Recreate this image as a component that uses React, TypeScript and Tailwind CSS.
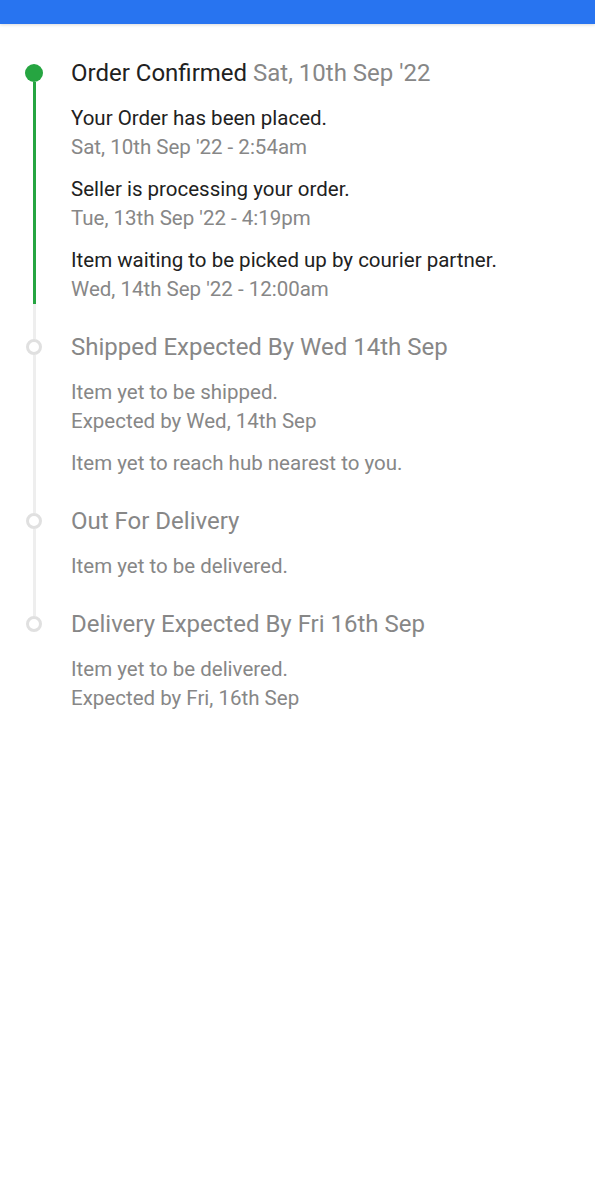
import React from 'react';

type Line = { text: string; sub?: string };
type Step = { title: string; date?: string; done: boolean; items: Line[] };

const steps: Step[] = [
  {
    title: 'Order Confirmed',
    date: "Sat, 10th Sep '22",
    done: true,
    items: [
      { text: 'Your Order has been placed.', sub: "Sat, 10th Sep '22 - 2:54am" },
      { text: 'Seller is processing your order.', sub: "Tue, 13th Sep '22 - 4:19pm" },
      { text: 'Item waiting to be picked up by courier partner.', sub: "Wed, 14th Sep '22 - 12:00am" },
    ],
  },
  {
    title: 'Shipped Expected By Wed 14th Sep',
    done: false,
    items: [
      { text: 'Item yet to be shipped.', sub: 'Expected by Wed, 14th Sep' },
      { text: 'Item yet to reach hub nearest to you.' },
    ],
  },
  {
    title: 'Out For Delivery',
    done: false,
    items: [{ text: 'Item yet to be delivered.' }],
  },
  {
    title: 'Delivery Expected By Fri 16th Sep',
    done: false,
    items: [{ text: 'Item yet to be delivered.', sub: 'Expected by Fri, 16th Sep' }],
  },
];

const App = () => {
  return (
    <div className="min-h-[1200px] bg-white" style={{ fontFamily: 'Roboto, sans-serif' }}>
      <div className="h-[24px] bg-[#2874f0] shadow-[0_1px_3px_rgba(0,0,0,0.15)]" />
      <div className="pt-[34px] pl-[25px] pr-4">
        {steps.map((step, i) => {
          const first = i === 0;
          const last = i === steps.length - 1;
          return (
            <div key={step.title} className="flex">
              {/* timeline column */}
              <div className="flex w-[18px] flex-col items-center">
                <div className="flex h-[30px] flex-col items-center">
                  <div className={`w-[3px] flex-1 ${first ? '' : 'bg-[#eeeeee]'}`} />
                  {step.done ? (
                    <div className="h-[18px] w-[18px] shrink-0 rounded-full bg-[#26a541]" />
                  ) : (
                    <div className="h-[16px] w-[16px] shrink-0 rounded-full border-[3px] border-[#e0e0e0] bg-white" />
                  )}
                  <div className={`w-[3px] flex-1 ${last ? '' : step.done ? 'bg-[#26a541]' : 'bg-[#eeeeee]'}`} />
                </div>
                {!last && (
                  <>
                    <div className={`w-[3px] flex-1 ${step.done ? 'bg-[#26a541]' : 'bg-[#eeeeee]'}`} />
                    <div className="h-[28px] w-[3px] bg-[#eeeeee]" />
                  </>
                )}
              </div>
              {/* content */}
              <div className={`ml-[28px] flex-1 ${last ? '' : 'pb-[28px]'}`}>
                <div className={`text-[24px] leading-[30px] ${step.done ? 'text-[#212121]' : 'text-[#878787]'}`}>
                  {step.title}
                  {step.date && <span className="text-[#878787]"> {step.date}</span>}
                </div>
                <div className="mt-[16px] flex flex-col gap-[13px]">
                  {step.items.map((it) => (
                    <div key={it.text} className="text-[20.5px] leading-[29px]">
                      <div className={step.done ? 'text-[#212121]' : 'text-[#878787]'}>{it.text}</div>
                      {it.sub && <div className="text-[#878787]">{it.sub}</div>}
                    </div>
                  ))}
                </div>
              </div>
            </div>
          );
        })}
      </div>
    </div>
  );
};

export default App;
